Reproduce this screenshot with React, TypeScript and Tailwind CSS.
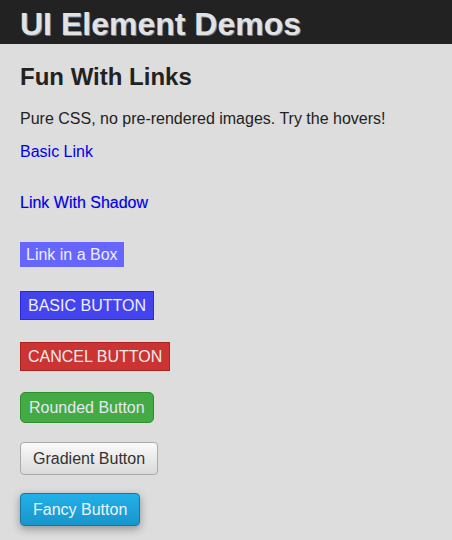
import React from 'react';

const App: React.FC = () => {
  return (
    <div className="min-h-[540px] bg-[#dddddd] font-['Liberation_Sans',Arial,sans-serif] text-[#222222]">
      <header className="h-[44px] bg-[#222222] px-[20px] pt-[8px]">
        <h1 className="text-[32px] font-bold leading-[32px] text-[#e2e2e2] [text-shadow:1px_1px_0_#6a7fa0]">
          UI Element Demos
        </h1>
      </header>

      <main className="px-[20px]">
        <h2 className="mt-[19px] text-[24px] font-bold leading-[28px] text-[#222222]">Fun With Links</h2>
        <p className="mt-[19px] text-[16px] leading-[18px]">
          Pure CSS, no pre-rendered images. Try the hovers!
        </p>

        <div className="flex flex-col items-start text-[16px] leading-[18px]">
          <a href="#" className="mt-[15px] text-[#0000ee]">Basic Link</a>
          <a href="#" className="mt-[33px] text-[#0000ee] [text-shadow:0_0_1px_rgba(0,0,100,0.3)]">
            Link With Shadow
          </a>
          <a href="#" className="mt-[30px] bg-[#6666ff] px-[6px] py-[3.5px] text-[#eeeeff]">
            Link in a Box
          </a>
          <button className="mt-[24px] border border-[#2b2bd6] bg-[#4444ee] px-[7px] py-[4.5px] text-[#eeeeff]">
            BASIC BUTTON
          </button>
          <button className="mt-[22px] border border-[#aa2222] bg-[#cc3333] px-[7px] py-[4.5px] text-[#eeeeee]">
            CANCEL BUTTON
          </button>
          <button className="mt-[21px] rounded-[5px] border border-[#2f8f2f] bg-[#44aa44] px-[8px] py-[5.5px] text-[#e4e8f4]">
            Rounded Button
          </button>
          <button className="mt-[19px] rounded-[4px] border border-[#aaaaaa] bg-gradient-to-b from-[#fafafa] to-[#dadada] px-[12px] py-[6.5px] text-[#333333]">
            Gradient Button
          </button>
          <button className="mt-[18px] rounded-[4px] border border-[#1677a3] bg-gradient-to-b from-[#22b0e8] to-[#1896cc] px-[12px] py-[6.5px] text-[#f0f4f8] shadow-[0_3px_8px_rgba(0,0,0,0.35)]">
            Fancy Button
          </button>
        </div>
      </main>
    </div>
  );
};

export default App;
